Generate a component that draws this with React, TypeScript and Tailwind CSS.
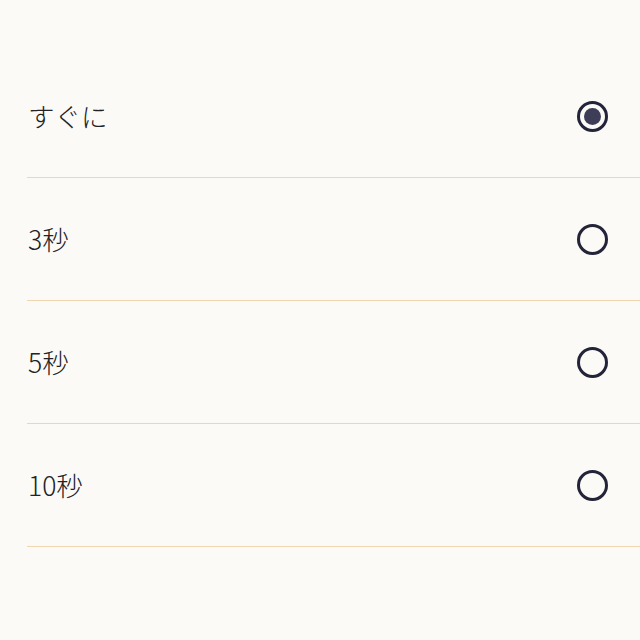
import { useState } from 'react';

const options = ['すぐに', '3秒', '5秒', '10秒'];

function Radio({ checked }: { checked: boolean }) {
  return (
    <span className="flex h-[31px] w-[31px] items-center justify-center rounded-full border-[3px] border-[#23233a]">
      {checked && <span className="h-[17px] w-[17px] rounded-full bg-[#3d3d58]" />}
    </span>
  );
}

export default function App() {
  const [selected, setSelected] = useState(0);
  return (
    <div
      className="min-h-[640px] w-[640px] bg-[#fbfaf6] pt-[55px]"
      style={{ fontFamily: '"Noto Sans CJK JP", "Noto Sans", sans-serif' }}
    >
      <ul className="pl-[27px]">
        {options.map((label, i) => (
          <li key={label} className="border-b border-[#efd6ac]">
            <button
              type="button"
              onClick={() => setSelected(i)}
              className="flex h-[122px] w-full items-center justify-between pr-[32px] text-left"
            >
              <span className="pl-px text-[26.5px] font-light leading-none text-[#222226]">{label}</span>
              <Radio checked={selected === i} />
            </button>
          </li>
        ))}
      </ul>
    </div>
  );
}
